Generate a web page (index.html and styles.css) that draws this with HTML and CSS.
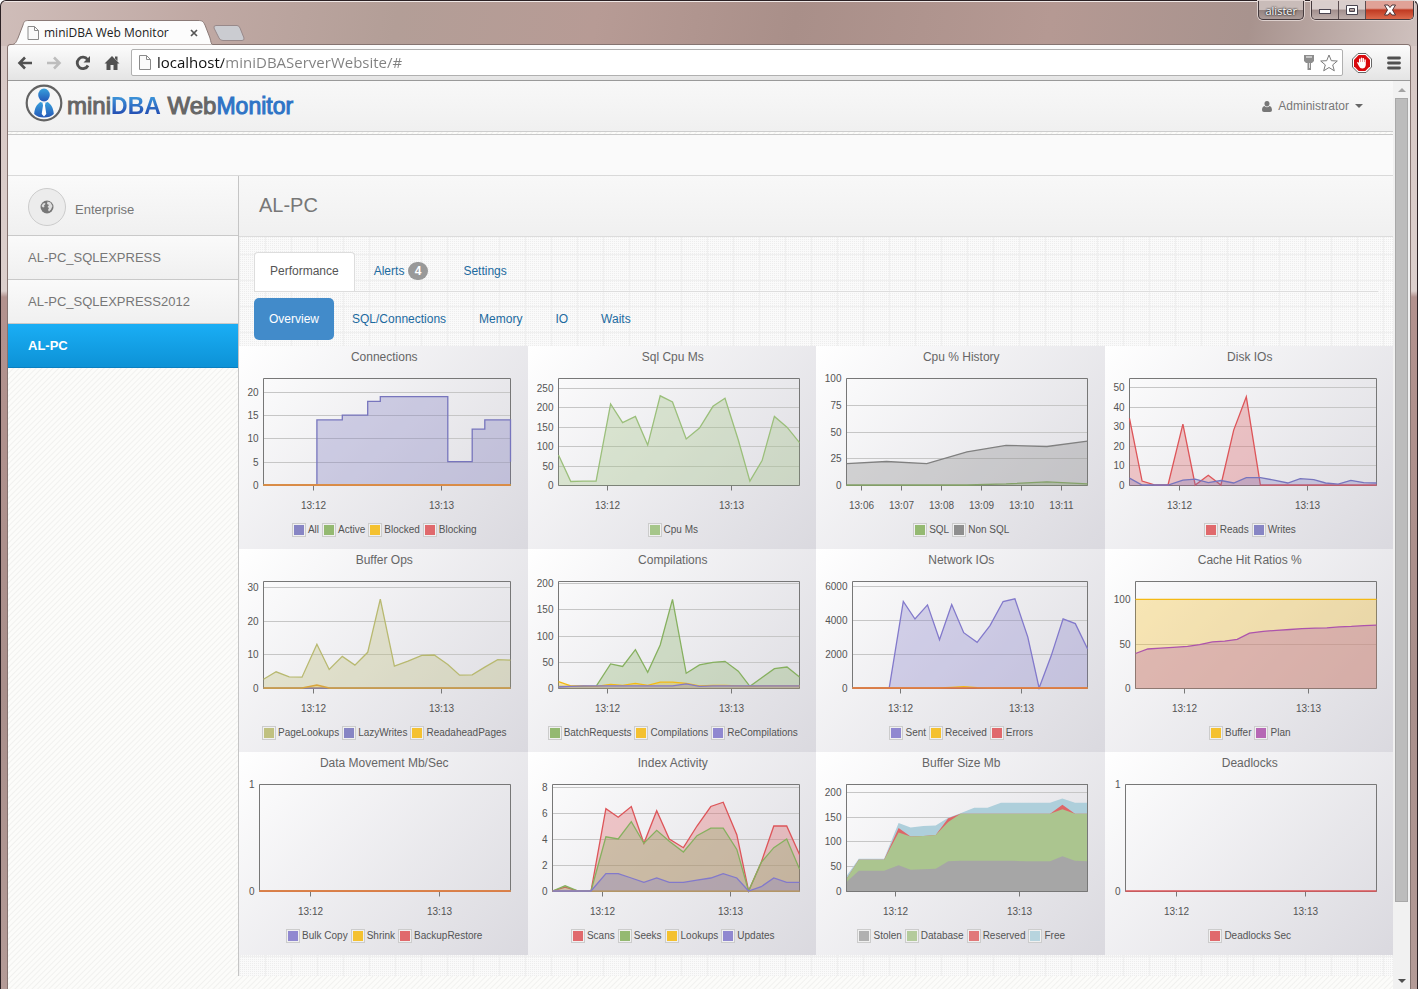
FILE: index.html
```html
<!DOCTYPE html>
<html lang="en">
<head>
    <meta charset="utf-8">
    <title>miniDBA Web Monitor</title>
    <link rel="stylesheet" href="styles.css">
</head>
<body>
<div class="window">
    <div class="titlebar">
        <div class="browser-tab">
            <svg class="tab-shape" width="202" height="25" viewBox="0 0 202 25">
                <path d="M0 25 C5 24 5 22 7 18 L12 5 C13 1 14 .5 18 .5 H187 C191 .5 192 1 194 5 L199 18 C200 22 200 24 202 25 Z" fill="#fcfcfc" stroke="#8b7a77"/>
            </svg>
            <svg class="page-icon" width="12" height="14" viewBox="0 0 12 14">
                <path d="M1 .5 H7.500 L11.500 4.500 V13.500 H1 Z M7.500 .5 V4.500 H11.500" fill="#fafafa" stroke="#8a8a8a"/>
            </svg>
            <span class="tab-title">miniDBA Web Monitor</span>
            <button class="tab-close" aria-label="Close tab">
                <svg width="8" height="8" viewBox="0 0 8 8"><path d="M1 1 L7 7 M7 1 L1 7" stroke="#555" stroke-width="1.700"/></svg>
            </button>
        </div>
        <button class="new-tab" aria-label="New tab">
            <svg width="32" height="16" viewBox="0 0 32 16"><path d="M3 .5 H24 Q26 .5 27 3 L31 13 Q31.500 15.500 29 15.500 H10 Q7 15.500 6 13 L1 3 Q.5 .5 3 .5 Z" fill="#cbccd1" stroke="#98898a"/></svg>
        </button>
        <div class="window-controls">
            <button class="user-button">alister</button>
            <div class="control-group">
                <button aria-label="Minimize">
                    <svg width="14" height="14" viewBox="0 0 14 14"><rect x="1.500" y="6.500" width="11" height="4" fill="#fff" stroke="#4a4550"/></svg>
                </button>
                <button aria-label="Maximize">
                    <svg width="14" height="14" viewBox="0 0 14 14"><path d="M1.500 2.500 H12.500 V11.500 H1.500 Z M4.500 5.500 V8.500 H9.500 V5.500 Z" fill="#fff" fill-rule="evenodd" stroke="#4a4550"/></svg>
                </button>
                <button class="close-button" aria-label="Close">
                    <svg width="14" height="12" viewBox="0 0 14 12"><path d="M1.500 1 H5 L7 3.500 L9 1 H12.500 L9.500 6 L12.500 11 H9 L7 8.500 L5 11 H1.500 L4.500 6 Z" fill="#fff" stroke="#4d3436"/></svg>
                </button>
            </div>
        </div>
    </div>

    <div class="frame">
        <div class="toolbar">
            <button aria-label="Back">
                <svg width="16" height="14" viewBox="0 0 16 14"><path d="M2 7 H15 M8 1.500 L2.500 7 L8 12.500" fill="none" stroke="#505050" stroke-width="2.600"/></svg>
            </button>
            <button aria-label="Forward">
                <svg width="16" height="14" viewBox="0 0 16 14"><path d="M1 7 H14 M8 1.500 L13.500 7 L8 12.500" fill="none" stroke="#bdbdbd" stroke-width="2.600"/></svg>
            </button>
            <button aria-label="Reload">
                <svg width="16" height="16" viewBox="0 0 16 16"><path d="M12.500 4.500 A5.700 5.700 0 1 0 13 10.500" fill="none" stroke="#505050" stroke-width="2.800"/><path d="M15 1 V7.500 H8.500 Z" fill="#505050"/></svg>
            </button>
            <button aria-label="Home">
                <svg width="16" height="16" viewBox="0 0 16 16"><path d="M8 1 L15.500 8.500 H13.500 V15 H9.500 V10 H6.500 V15 H2.500 V8.500 H.5 Z M11 1.500 H13.500 V6 L11 3.500 Z" fill="#505050"/></svg>
            </button>
            <div class="omnibox">
                <svg width="12" height="15" viewBox="0 0 12 15">
                    <path d="M.5 .5 H7.500 L11.500 4.500 V14.500 H.5 Z M7.500 .5 V4.500 H11.500" fill="#fafafa" stroke="#8a8a8a"/>
                </svg>
                <input type="text" class="url" aria-label="Address" value="localhost/miniDBAServerWebsite/#">
                <svg width="10" height="15" viewBox="0 0 10 15"><path d="M0 0 H10 V6 L8 8 H7 V15 H3.500 V8 H2 L0 6 Z" fill="#8d8d8d"/><path d="M2 2 H8" stroke="#fff"/><path d="M5.500 8 V13" stroke="#ddd"/></svg>
                <svg width="18" height="18" viewBox="0 0 18 18"><path d="M9 1 L11.300 6.700 L17.300 7 L12.700 10.900 L14.300 16.800 L9 13.500 L3.700 16.800 L5.300 10.900 L.7 7 L6.700 6.700 Z" fill="#fff" stroke="#7b7b7b"/></svg>
            </div>
            <button class="blocker" aria-label="Blocker">
                <svg width="20" height="20" viewBox="0 0 20 20"><path d="M6 .5 H14 L19.500 6 V14 L14 19.500 H6 L.5 14 V6 Z" fill="#fff" stroke="#666"/><path d="M6.700 2 H13.300 L18 6.700 V13.300 L13.300 18 H6.700 L2 13.300 V6.700 Z" fill="#d9090d"/><path d="M5 9.500 Q6 8.500 7 10 V6 Q7.700 5.200 8.400 6 V9 H8.800 V5 Q9.500 4.200 10.200 5 V9 H10.600 V5.300 Q11.300 4.500 12 5.300 V9 H12.400 V6.500 Q13.200 6 13.800 6.700 V12 Q13.300 15.500 10.200 15.500 Q8 15.500 7 13.300 Z" fill="#fff"/></svg>
            </button>
            <button aria-label="Menu">
                <svg width="14" height="14" viewBox="0 0 14 14"><path d="M1.500 2 H12.500 M1.500 7 H12.500 M1.500 12 H12.500" stroke="#505050" stroke-width="2.800" stroke-linecap="round"/></svg>
            </button>
        </div>

        <div class="viewport">
            <div class="page">
                <header class="page-header">
                    <a class="logo" href="#">
                        <svg width="38" height="38" viewBox="0 0 38 38">
                            <defs>
                                <linearGradient id="person" x1="0" y1="0" x2="0" y2="1">
                                    <stop offset="0" stop-color="#38a0dc"/>
                                    <stop offset="1" stop-color="#2458b8"/>
                                </linearGradient>
                            </defs>
                            <circle cx="19" cy="19" r="17.300" fill="#f6f6f6" stroke="#636363" stroke-width="2.200"/>
                            <ellipse cx="19" cy="11" rx="5.800" ry="6.500" fill="url(#person)"/>
                            <path d="M15.500 18 C12 20 9.500 24 9.200 30 C11.500 32.500 15 33.500 19 33.500 C23 33.500 26.500 32.500 28.800 30 C28.500 24 26 20 22.500 18 Q19 20 15.500 18 Z" fill="url(#person)"/>
                            <path d="M17.500 19 H20.500 L20 21.500 L21.300 30 L19 32.500 L16.700 30 L18 21.500 Z" fill="#fff"/>
                        </svg>
                        <span class="logo-text">mini<b>DBA</b> Web<span class="monitor">Monitor</span></span>
                    </a>
                    <a class="user-menu" href="#">
                        <svg width="10" height="11" viewBox="0 0 10 11"><path d="M5 0 C7 0 7.700 1.500 7.500 3 C7.400 4.500 6.500 5.500 5 5.500 C3.500 5.500 2.600 4.500 2.500 3 C2.300 1.500 3 0 5 0 Z M2.500 5 Q5 7.500 7.500 5 Q10 5.500 10 9 Q10 11 8 11 H2 Q0 11 0 9 Q0 5.500 2.500 5 Z" fill="#777"/></svg>
                        Administrator
                        <span class="caret"></span>
                    </a>
                </header>
                <div class="hatch-strip"></div>
                <div class="banner"></div>

                <div class="columns">
                    <nav class="sidebar">
                        <a class="enterprise" href="#">
                            <span class="globe">
                                <svg width="14" height="14" viewBox="0 0 14 14"><circle cx="7" cy="7" r="6.500" fill="#777"/><path d="M7.500 1.500 L10.500 2.500 L12.500 6 L11 9.500 L9 11.500 L8 10 L9 8 L7.500 7 L9 5 L7 4 Z M1.500 6 L3 3.500 L5 3 L5.500 4 L4 5.500 L4.500 7 L3 7.500 Z" fill="#dedede"/></svg>
                            </span>
                            <span class="enterprise-name">Enterprise</span>
                        </a>
                        <a class="server" href="#">AL-PC_SQLEXPRESS</a>
                        <a class="server" href="#">AL-PC_SQLEXPRESS2012</a>
                        <a class="server active" href="#">AL-PC</a>
                    </nav>

                    <main class="main">
                        <h1 class="main-title">AL-PC</h1>
                        <div class="main-nav">
                            <div class="tabs">
                                <a class="active" href="#">Performance</a>
                                <a href="#">Alerts <span class="badge">4</span></a>
                                <a href="#">Settings</a>
                            </div>
                            <div class="pills">
                                <a class="active" href="#">Overview</a>
                                <a href="#">SQL/Connections</a>
                                <a href="#">Memory</a>
                                <a href="#">IO</a>
                                <a href="#">Waits</a>
                            </div>
                        </div>
                        <div class="charts" id="charts"></div>
                    </main>
                </div>
            </div>

            <div class="scrollbar">
                <div class="arrow up"></div>
                <div class="track"><div class="thumb"></div></div>
                <div class="arrow down"></div>
            </div>
        </div>
    </div>
</div>
<script src="charts.js"></script>
</body>
</html>
```

FILE: styles.css
```css
* {
    box-sizing: border-box;
}

body {
    margin: 0;
    font-family: "Liberation Sans", Arial, sans-serif;
    font-size: 12px;
    color: #777;
}

a {
    text-decoration: none;
    color: inherit;
}

button {
    padding: 0;
    border: none;
    background: none;
    font-family: inherit;
}

svg {
    display: block;
    flex: none;
}

/* browser window */

.window {
    display: flex;
    flex-direction: column;
    min-height: 100vh;
    padding: 0 6px;
    border: 1px solid #2b2124;
    border-bottom: none;
    border-radius: 6px 6px 0 0;
    background:
        linear-gradient(#f0e8e6, #f0e8e6) top / 100% 1px no-repeat,
        linear-gradient(100deg, #cfbdb9 0, #c0a9a4 14%, #b39e97 28%, #b79b95 42%, #a98f89 56%, #b59993 74%, #a8938e 88%, #cfc1be 100%) top / 100% 45px no-repeat,
        linear-gradient(#d6c6c3 0, #dccfcc 290px, #b3928e 296px, #a98f8b 70%, #b49b97 100%);
}

.titlebar {
    display: flex;
    height: 43px;
    padding-left: 4px;
}

.browser-tab {
    position: relative;
    display: flex;
    align-items: center;
    width: 202px;
    height: 25px;
    margin-top: 19px;
    padding: 0 15px 0 16px;
}

.tab-shape {
    position: absolute;
    left: 0;
    top: 0;
}

.page-icon,
.tab-title,
.tab-close {
    position: relative;
}

.tab-title {
    flex: 1;
    margin-left: 5px;
    font-family: "Open Sans", "Noto Sans", sans-serif;
    font-size: 12px;
    white-space: nowrap;
    color: #222;
}

.new-tab {
    align-self: flex-start;
    margin-top: 24px;
}

.window-controls {
    display: flex;
    align-items: flex-start;
    gap: 7px;
    margin-left: auto;
    margin-right: -3px;
}

.user-button,
.control-group {
    display: flex;
    height: 19px;
    border: 1px solid #43393c;
    border-top: none;
    border-radius: 0 0 5px 5px;
    overflow: hidden;
    box-shadow: 0 0 0 1px #ddd0cd;
}

.user-button {
    align-items: center;
    padding: 0 6px;
    font-family: "Open Sans", "Noto Sans", sans-serif;
    font-size: 11px;
    color: #fff;
    text-shadow: 0 0 2px #222, 0 0 2px #222;
    background: linear-gradient(#c9bcb9 50%, #93827f 50%, #ab9b98);
}

.control-group button {
    display: flex;
    align-items: center;
    justify-content: center;
    width: 27px;
    border-right: 1px solid #5a4d50;
    background: linear-gradient(#d9cecc 45%, #a28f8d 50%, #bdaeab);
}

.control-group .close-button {
    width: 47px;
    border-right: none;
    background: linear-gradient(#e0a297 40%, #c03a22 50%, #dc6a4c);
}

.frame {
    flex: 1;
    display: flex;
    flex-direction: column;
    border: 1px solid #857370;
    border-bottom: none;
    border-radius: 4px 4px 0 0;
}

.toolbar {
    display: flex;
    align-items: center;
    gap: 13px;
    height: 36px;
    padding: 0 9px;
    border-bottom: 1px solid #9a9a9a;
    border-radius: 3px 3px 0 0;
    background: linear-gradient(#fcfcfc, #e4e4e4);
}

.omnibox {
    flex: 1;
    display: flex;
    align-items: center;
    gap: 6px;
    height: 27px;
    margin-left: -2px;
    padding: 0 4px 0 7px;
    border: 1px solid #b0b0b0;
    border-radius: 2px;
    background: #fff;
}

.url {
    flex: 1;
    min-width: 0;
    padding: 0 0 2px;
    border: none;
    outline: none;
    font-family: "Open Sans", "Noto Sans", sans-serif;
    font-size: 15px;
    /* host in black, the rest of the address in grey */
    color: transparent;
    background: linear-gradient(90deg, #111 67px, #808080 67px);
    -webkit-background-clip: text;
    background-clip: text;
}

.blocker {
    margin: 0 2px 0 -4px;
}

.viewport {
    flex: 1;
    display: flex;
}

.scrollbar {
    display: flex;
    flex-direction: column;
    width: 17px;
    padding: 0 2px;
    background: #f1f1f1;
}

.arrow {
    height: 17px;
    display: flex;
    align-items: center;
    justify-content: center;
}

.arrow::before {
    content: "";
    border: 4px solid transparent;
    border-top: none;
    border-bottom-color: #a3a3a3;
}

.arrow.down::before {
    border: 4px solid transparent;
    border-bottom: none;
    border-top-color: #505050;
}

.track {
    flex: 1;
}

.thumb {
    height: 92%;
    border: 1px solid #a8a8a8;
    background: #bcbcbc;
}

/* page */

.page {
    flex: 1;
    min-width: 0;
    background: repeating-linear-gradient(135deg, #fcfcfa 0, #fcfcfa 2px, #f1f1ef 3px, #fcfcfa 4px);
}

.page-header {
    display: flex;
    align-items: center;
    justify-content: space-between;
    height: 51px;
    padding: 0 30px 0 17px;
    border-bottom: 1px solid #cdcdcd;
    background: linear-gradient(#f8f8f8, #f0f0f0);
}

.logo {
    display: flex;
    align-items: center;
    gap: 4px;
    margin-bottom: 6px;
}

.logo-text {
    padding-top: 6px;
    font-size: 24px;
    line-height: 28px;
    color: #666;
    -webkit-text-stroke: 1px #666;
}

.logo-text b {
    font-size: 23px;
    color: transparent;
    -webkit-text-stroke: 0;
    background: linear-gradient(#3a8fd6 20%, #2450b4 80%);
    -webkit-background-clip: text;
    background-clip: text;
}

.logo-text .monitor {
    font-size: 23px;
    color: #2f74c6;
    -webkit-text-stroke: 1px #2f74c6;
}

.user-menu {
    display: flex;
    align-items: center;
    gap: 6px;
}

.caret {
    border: 4px solid transparent;
    border-top-color: #666;
    border-bottom: none;
}

.hatch-strip {
    height: 3px;
    border-bottom: 1px solid #c8c8c8;
}

.banner {
    height: 41px;
    border-bottom: 1px solid #d9d9d9;
    background: #fafafa;
}

.columns {
    display: flex;
}

.sidebar {
    width: 230px;
    flex: none;
}

.sidebar a {
    display: flex;
    align-items: center;
    padding: 0 20px;
    font-size: 13px;
    border-bottom: 1px solid #c9c9c9;
    background: linear-gradient(#fafafa, #f0f0f0);
}

.sidebar .enterprise {
    height: 60px;
    gap: 9px;
    padding-top: 2px;
}

.enterprise-name {
    padding-top: 5px;
}

.globe {
    display: flex;
    align-items: center;
    justify-content: center;
    width: 38px;
    height: 38px;
    border: 1px solid #ccc;
    border-radius: 50%;
    background: #ececec;
}

.sidebar .server {
    height: 44px;
}

.sidebar .active {
    font-weight: bold;
    color: #fff;
    border-bottom-color: #0a7fc0;
    background: linear-gradient(#1aaef5, #0d92d6);
}

.main {
    flex: 1;
    min-width: 0;
    padding-bottom: 21px;
    border-left: 1px solid #c5c5c5;
    background:
        linear-gradient(90deg, #f0f0f0 1px, transparent 1px) 0 0 / 26px 26px,
        linear-gradient(#f0f0f0 1px, transparent 1px) 0 0 / 26px 26px,
        linear-gradient(90deg, #fafafa 1px, transparent 1px) 0 0 / 2px 2px,
        linear-gradient(#fafafa 1px, transparent 1px) 0 0 / 2px 2px,
        #ededed;
}

.main-title {
    margin: 0;
    padding: 0 20px;
    font-size: 20px;
    font-weight: normal;
    line-height: 58px;
    height: 61px;
    border-bottom: 1px solid #dcdcdc;
    background: linear-gradient(#f8f8f8, #f0f0f0);
}

.main-nav {
    padding: 15px 15px 6px;
}

.main-nav a {
    color: #1c6a9f;
}

.tabs {
    display: flex;
    gap: 3px;
    border-bottom: 1px solid #ddd;
}

.tabs a {
    height: 39px;
    padding: 0 15px;
    line-height: 36px;
    border: 1px solid transparent;
    border-bottom: none;
    border-radius: 4px 4px 0 0;
}

.main-nav .tabs .active {
    color: #555;
    border-color: #ddd;
    background: #fff;
}

.badge {
    display: inline-block;
    padding: 0 7px;
    line-height: 18px;
    border-radius: 9px;
    font-weight: bold;
    color: #fff;
    background: #999;
}

.pills {
    display: flex;
    gap: 3px;
    margin-top: 6px;
}

.pills a {
    padding: 0 15px;
    line-height: 42px;
    border-radius: 5px;
}

.main-nav .pills .active {
    color: #fff;
    background: #428bca;
}

/* charts */

.charts {
    display: grid;
    grid-template-columns: repeat(4, 1fr);
}

.chart {
    min-width: 0;
    padding-bottom: 12px;
    background: linear-gradient(135deg, #fff, #dad9df);
}

.chart h2 {
    margin: 0;
    padding-left: 2px;
    font-size: 12px;
    font-weight: normal;
    line-height: 22px;
    text-align: center;
    color: #666;
}

.chart svg {
    width: 100%;
    height: 150px;
}

.chart text {
    font-size: 10px;
    fill: #545454;
}

.chart .y-label {
    text-anchor: end;
}

.chart .x-label {
    text-anchor: middle;
}

.legend {
    display: flex;
    justify-content: center;
    gap: 3px;
    margin-top: 5px;
    padding-left: 2px;
    font-size: 10px;
    line-height: 14px;
    color: #545454;
    white-space: nowrap;
}

.legend span {
    display: flex;
    gap: 2px;
}

.legend i {
    width: 14px;
    height: 14px;
    padding: 1px;
    border: 1px solid #ccc;
    background-color: #f0f0f0;
}

.legend i::before {
    content: "";
    display: block;
    height: 10px;
    background: var(--swatch);
    opacity: .88;
}
```

FILE: charts.js
```js
var BLUE = "#7775bd", GREEN = "#86b05f", YELLOW = "#f4b914", RED = "#dd5559",
    GREY = "#808080", OLIVE = "#b8b970", VIOLET = "#8279cb", PURPLE = "#ad54ac";

// sample times as a share of the plot width
var TIMES = [0, .051, .104, .156, .216, .266, .319, .370, .422, .473, .530, .585, .641, .691, .746, .794, .845, .896, .948, 1];
var MINUTES = [[.202, "13:12"], [.717, "13:13"]];

function flat(value) {
    return TIMES.map(function () { return value; });
}

var charts = [
    { title: "Connections", left: 24.5, max: 23, ticks: [0, 5, 10, 15, 20], step: true, series: [
        { name: "All", color: BLUE, data: [0, 0, 0, 0, 14, 14, 15, 15, 18, 19, 19, 19, 19, 19, 5, 5, 12, 14, 14, 5] },
        { name: "Active", color: GREEN, data: flat(0) },
        { name: "Blocked", color: YELLOW, data: flat(0) },
        { name: "Blocking", color: RED, line: "#d98050", data: flat(0) }
    ] },
    { title: "Sql Cpu Ms", left: 30.5, max: 276, ticks: [0, 50, 100, 150, 200, 250], series: [
        { name: "Cpu Ms", color: "#9bbf7b", data: [77, 9, 10, 10, 209, 161, 177, 103, 230, 214, 119, 147, 203, 224, 116, 10, 63, 177, 149, 109] }
    ] },
    { title: "Cpu % History", left: 30.5, max: 100, ticks: [0, 25, 50, 75, 100],
      times: [0, .166, .333, .5, .662, .832, 1],
      minutes: [[.061, "13:06"], [.227, "13:07"], [.393, "13:08"], [.56, "13:09"], [.726, "13:10"], [.892, "13:11"]],
      series: [
        { name: "SQL", color: GREEN, data: [0, 0, 0, 0, 1, 3, 1] },
        { name: "Non SQL", color: GREY, data: [20, 22, 20, 31, 37, 36, 41] }
    ] },
    { title: "Disk IOs", left: 24.5, max: 54.6, ticks: [0, 10, 20, 30, 40, 50], series: [
        { name: "Reads", color: RED, data: [34, 2, 0, 0, 31, 0, 5, 0, 28, 45, 0, 0, 0, 0, 0, 0, 0, 0, 0, 0] },
        { name: "Writes", color: BLUE, data: [3.5, 0, 0, 0, 2.5, 3, 1.2, 2.3, 1, 3.8, 3.8, 2.5, 1, 3.2, 2.7, 1, .4, 2.4, 1.2, 1] }
    ] },
    { title: "Buffer Ops", left: 24.5, max: 31.8, ticks: [0, 10, 20, 30], series: [
        { name: "PageLookups", color: OLIVE, data: [2.6, 4.8, 3.3, 3.2, 13, 5.5, 9.4, 6.8, 10.6, 26.4, 6.5, 8, 9.7, 9.8, 7, 3.8, 3.9, 6.2, 8.4, 8.3] },
        { name: "LazyWrites", color: BLUE, data: flat(0) },
        { name: "ReadaheadPages", color: YELLOW, line: "#d9a53c", data: [0, 0, 0, 0, .9, 0, 0, 0, 0, 0, 0, 0, 0, 0, 0, 0, 0, 0, 0, 0] }
    ] },
    { title: "Compilations", left: 30.5, max: 204, ticks: [0, 50, 100, 150, 200], series: [
        { name: "BatchRequests", color: GREEN, data: [3, 3, 3, 3, 46, 41, 73, 30, 82, 169, 28, 44, 49, 51, 32, 3, 20, 37, 40, 21] },
        { name: "Compilations", color: YELLOW, data: [12, 4, 4, 3, 7, 5, 9, 5, 11, 11, 9, 4, 5, 5, 4, 3, 4, 4, 4, 4] },
        { name: "ReCompilations", color: VIOLET, data: [2, 3, 4, 4, 4, 4, 4, 4, 4, 4, 8, 3, 4, 4, 4, 4, 4, 4, 4, 4] }
    ] },
    { title: "Network IOs", left: 36.5, max: 6310, ticks: [0, 2000, 4000, 6000], series: [
        { name: "Sent", color: VIOLET, data: [0, 0, 0, 0, 5100, 4070, 4900, 2850, 4920, 3260, 2690, 3680, 5100, 5260, 3000, 0, 1880, 4080, 3800, 2310] },
        { name: "Received", color: YELLOW, data: [0, 0, 0, 0, 0, 0, 0, 0, 40, 80, 20, 0, 0, 0, 0, 0, 0, 0, 0, 0] },
        { name: "Errors", color: RED, line: "#d8704e", data: flat(0) }
    ] },
    { title: "Cache Hit Ratios %", left: 30.5, max: 120.8, ticks: [0, 50, 100], series: [
        { name: "Buffer", color: YELLOW, data: flat(100) },
        { name: "Plan", color: PURPLE, data: [39, 44, 45, 46, 47, 49, 52, 53, 55, 62, 64, 65, 66, 67, 67.5, 68, 69, 69.5, 70.5, 71] }
    ] },
    { title: "Data Movement Mb/Sec", left: 20.5, max: 1, ticks: [0, 1], series: [
        { name: "Bulk Copy", color: VIOLET, data: flat(0) },
        { name: "Shrink", color: YELLOW, data: flat(0) },
        { name: "BackupRestore", color: RED, line: "#d8734e", data: flat(0) }
    ] },
    { title: "Index Activity", left: 24.5, max: 8.23, ticks: [0, 2, 4, 6, 8], series: [
        { name: "Scans", color: RED, data: [0, .3, 0, 0, 6.33, 5.67, 6.5, 3.67, 6.17, 4, 3.33, 5, 6.5, 6.83, 4.33, 0, 2.2, 5, 5, 2.8] },
        { name: "Seeks", color: GREEN, data: [0, .4, 0, 0, 4.17, 4, 5.33, 3.67, 4.67, 3.83, 3, 4.25, 4.83, 4.83, 3.2, 0, 2.2, 3.33, 4, 1.7] },
        { name: "Lookups", color: YELLOW, line: "#c9a452", data: flat(0) },
        { name: "Updates", color: VIOLET, data: [0, 0, 0, 0, 1.33, 1.33, 1, .67, 1, .67, .67, .83, 1, 1.33, 1, 0, .33, 1, .67, .67] }
    ] },
    // running totals, drawn from the largest down
    { title: "Buffer Size Mb", left: 30.5, max: 216, ticks: [0, 50, 100, 150, 200], stacked: true, series: [
        { name: "Stolen", color: "#a6a6a6", data: [18, 41, 41, 41, 52, 43, 44, 45, 60, 61, 61, 61, 61, 61, 60, 60, 60, 70, 61, 60] },
        { name: "Database", color: "#abc58f", data: [24, 63, 63, 63, 118, 110, 111, 113, 139, 156, 156, 156, 156, 156, 156, 156, 156, 165, 156, 156] },
        { name: "Reserved", color: "#de6668", data: [24, 63, 63, 63, 127, 110, 111, 113, 147, 156, 156, 156, 156, 156, 156, 156, 156, 174, 156, 156] },
        { name: "Free", color: "#aecfdb", data: [30, 65, 65, 65, 137, 128, 131, 132, 148, 157, 168, 168, 178, 178, 178, 178, 178, 187, 178, 178] }
    ] },
    { title: "Deadlocks", left: 20.5, max: 1, ticks: [0, 1], series: [
        { name: "Deadlocks Sec", color: RED, data: flat(0) }
    ] }
];

var TOP = 10.5, BOTTOM = 117.5;

function drawChart(chart, width) {
    var left = chart.left, right = width - 16.5;
    var times = chart.times || TIMES;
    var out = "";

    function px(share) { return left + share * (right - left); }
    function py(value) { return BOTTOM - value / chart.max * (BOTTOM - TOP); }

    chart.ticks.forEach(function (tick) {
        var y = Math.round(py(tick) - .5) + .5;
        out += '<path d="M' + left + ' ' + y + 'H' + right + '" stroke="#c6c6c6"/>';
        out += '<text class="y-label" x="' + (left - 5) + '" y="' + (y + 3) + '">' + tick + '</text>';
    });
    (chart.minutes || MINUTES).forEach(function (minute) {
        var x = Math.round(px(minute[0])) + .5;
        out += '<path d="M' + x + ' ' + BOTTOM + 'v5" stroke="#777"/>';
        out += '<text class="x-label" x="' + x + '" y="141">' + minute[1] + '</text>';
    });
    out += '<path d="M' + left + ' ' + TOP + 'H' + right + 'V' + BOTTOM + 'H' + left + 'Z" fill="none" stroke="#777"/>';

    var series = chart.series.slice();
    if (chart.stacked) series.reverse();
    series.forEach(function (s) {
        var line = "";
        s.data.forEach(function (value, i) {
            var x = px(times[i]).toFixed(1), y = (py(value) - .5).toFixed(1);
            line += i === 0 ? "M" + x + " " + y : (chart.step ? "H" + x + "V" + y : "L" + x + " " + y);
        });
        var area = line + "V" + BOTTOM + "H" + left + "Z";
        if (chart.stacked) {
            out += '<path d="' + area + '" fill="' + s.color + '"/>';
        } else {
            out += '<path d="' + area + '" fill="' + s.color + '" fill-opacity=".3"/>';
            out += '<path d="' + line + '" fill="none" stroke="' + (s.line || s.color) + '" stroke-width="1.3"/>';
        }
    });
    if (chart.stacked) {
        out += '<path d="M' + left + ' ' + TOP + 'H' + right + 'V' + BOTTOM + 'H' + left + 'Z" fill="none" stroke="#777"/>';
    }
    return out;
}

var holder = document.getElementById("charts");
charts.forEach(function (chart) {
    var cell = document.createElement("section");
    cell.className = "chart";
    holder.appendChild(cell);
    cell.innerHTML = "<h2>" + chart.title + "</h2><svg></svg><div class='legend'>" +
        chart.series.map(function (s) {
            return "<span><i style='--swatch:" + s.color + "'></i>" + s.name + "</span>";
        }).join("") + "</div>";
});

function drawAll() {
    holder.querySelectorAll(".chart").forEach(function (cell, i) {
        var width = Math.floor(cell.getBoundingClientRect().width);
        cell.querySelector("svg").innerHTML = drawChart(charts[i], width);
    });
}

drawAll();
window.addEventListener("resize", drawAll);
```
